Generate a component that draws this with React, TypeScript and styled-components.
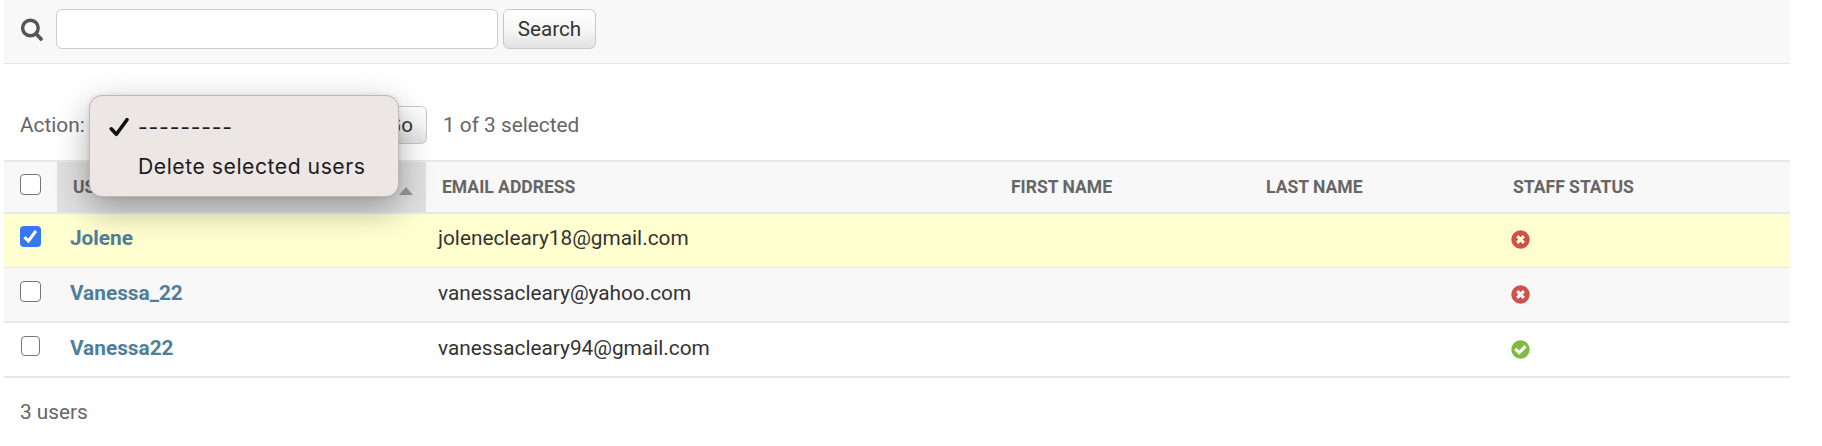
import React from "react";
import styled, { createGlobalStyle, css } from "styled-components";

const Global = createGlobalStyle`
  * { box-sizing: border-box; }
  body {
    margin: 0;
    background: #fff;
    color: #333;
    font-family: Roboto, "Liberation Sans", sans-serif;
    font-size: 20.8px;
    overflow: hidden;
  }
`;

const Page = styled.main`
  width: 1786px;
  height: 446px;
  margin-left: 4px;
`;

const Toolbar = styled.form`
  display: flex;
  align-items: flex-start;
  height: 64px;
  padding: 9px 0 0 16px;
  background: #f8f8f8;
  border-bottom: 1px solid #e4e4e4;
`;

const SearchIcon = styled.svg`
  width: 24px;
  height: 24px;
  margin: 9px 12px 0 0;
`;

const SearchInput = styled.input`
  width: 442px;
  height: 40px;
  margin: 0 5px 0 0;
  padding: 0 8px;
  border: 1px solid #ccc;
  border-radius: 6px;
  background: #fff;
`;

const Button = styled.button<{ $width: number; $height: number }>`
  width: ${(p) => p.$width}px;
  height: ${(p) => p.$height}px;
  padding: 0;
  border: 1px solid #c9c9c9;
  border-radius: 6px;
  background: linear-gradient(#fff, #f6f6f6 50%, #e2e2e2);
  color: #333;
  font: inherit;
  font-size: 20.6px;
`;

const GoText = styled.span`
  display: block;
  padding-right: 13px;
  text-align: right;
`;

const Actions = styled.div`
  position: relative;
  display: flex;
  align-items: center;
  height: 96px;
  padding: 26px 0 0 16px;
  color: #666;
  font-size: 20.8px;
`;

const ActionLabel = styled.span`
  width: 290px;
`;

const Counter = styled.span`
  margin-left: 16px;
`;

const Menu = styled.ul`
  position: absolute;
  z-index: 2;
  top: 31px;
  left: 85px;
  width: 310px;
  height: 102px;
  margin: 0;
  padding: 11px 0 0 19px;
  list-style: none;
  border: 1px solid #bbb8b7;
  border-radius: 13px;
  background: #ece6e4;
  box-shadow: 0 12px 34px rgba(0, 0, 0, 0.32), 0 0 4px rgba(0, 0, 0, 0.1);
  color: #1d1b1b;
  font-family: Inter, "Liberation Sans", sans-serif;
  font-size: 21.2px;
  letter-spacing: 0.52px;
`;

const Option = styled.li`
  display: grid;
  grid-template-columns: 29px 1fr;
  align-items: center;
  height: 39px;
  white-space: nowrap;
`;

const Dashes = styled.span`
  letter-spacing: 0.8px;
`;

const Table = styled.div`
  border-top: 2px solid #e8e8e8;
`;

const columns = css`
  display: grid;
  grid-template-columns: 53px 369px 569px 255px 247px 1fr;
`;

const HeaderRow = styled.div`
  ${columns}
  height: 52px;
  background: #f8f8f8;
  border-bottom: 2px solid #e8e8e8;
  color: #666;
  font-size: 17.55px;
  font-weight: 700;
  text-transform: uppercase;
`;

const HeaderCell = styled.div<{ $sorted?: boolean }>`
  display: flex;
  align-items: center;
  justify-content: space-between;
  padding: 0 13px 0 16px;
  background: ${(p) => (p.$sorted ? "#e0e0e0" : "transparent")};
`;

const SortArrow = styled.span`
  margin-top: 7px;
  border: solid transparent;
  border-width: 0 7px 8px;
  border-bottom-color: #999;
`;

const Row = styled.div<{ $bg: string; $line: number }>`
  ${columns}
  height: ${(p) => 53 + p.$line}px;
  background: ${(p) => p.$bg};
  border-bottom: ${(p) => p.$line}px solid #e8e8e8;
`;

const Cell = styled.div<{ $top: number }>`
  padding: ${(p) => p.$top}px 0 0 12px;
  line-height: 24px;
`;

const UserName = styled.a`
  margin-left: 1px;
  color: #507e99;
  font-weight: 700;
`;

const CheckCell = styled.div<{ $top: number }>`
  padding: ${(p) => p.$top}px 0 0 16px;
`;

const Box = styled.span<{ $on?: boolean; $small?: boolean }>`
  display: grid;
  place-items: center;
  width: ${(p) => (p.$small ? 19.5 : 21)}px;
  height: ${(p) => (p.$small ? 19.5 : 21)}px;
  margin-left: ${(p) => (p.$small ? 0.75 : 0)}px;
  border: ${(p) => (p.$on ? "0" : "1.5px solid #767676")};
  border-radius: 4px;
  background: ${(p) => (p.$on ? "#3478f6" : "#fff")};
`;

const Status = styled.svg`
  display: block;
  width: 19px;
  height: 19px;
  margin-top: 4px;
  margin-left: 2px;
`;

const Paginator = styled.p`
  margin: 22px 0 0 16px;
  color: #666;
  line-height: 24px;
`;

function Checkbox({ on, small }: { on?: boolean; small?: boolean }) {
  return (
    <Box role="checkbox" aria-checked={!!on} $on={on} $small={small}>
      {on && (
        <svg width="21" height="21" viewBox="0 0 21 21" fill="none">
          <path d="M4.4 11.2 8.4 14.9 15.9 5" stroke="#fff" strokeWidth="3.1" />
        </svg>
      )}
    </Box>
  );
}

function StaffIcon({ staff, mark }: { staff: boolean; mark: string }) {
  return (
    <Status viewBox="0 0 19 19" fill="none">
      <circle cx="9.5" cy="9.5" r="9.2" fill={staff ? "#80bb41" : "#cf514b"} />
      <path
        d={staff ? "M4.2 8.8 8.3 12.5 14.6 6.2" : "M6.2 6.2 12.8 12.8M12.8 6.2 6.2 12.8"}
        stroke={mark}
        strokeWidth="3.1"
      />
    </Status>
  );
}

const users = [
  { name: "Jolene", email: "jolenecleary18@gmail.com", staff: false, bg: "#ffffd0", line: 1, checkTop: 12, textTop: 12, small: false, on: true },
  { name: "Vanessa_22", email: "vanessacleary@yahoo.com", staff: false, bg: "#f8f8f8", line: 2, checkTop: 13, textTop: 13, small: false, on: false },
  { name: "Vanessa22", email: "vanessacleary94@gmail.com", staff: true, bg: "#fff", line: 2, checkTop: 13, textTop: 13, small: true, on: false },
];

export default function App() {
  return (
    <Page>
      <Global />
      <Toolbar>
        <SearchIcon viewBox="0 0 24 24" fill="none" stroke="#555" strokeWidth="3.4">
          <circle cx="10.4" cy="10" r="7.8" />
          <path d="M16 15.8 21 21" strokeWidth="3.8" strokeLinecap="round" />
        </SearchIcon>
        <SearchInput aria-label="Search" />
        <Button type="button" $width={93} $height={40}>Search</Button>
      </Toolbar>
      <Actions>
        <ActionLabel>Action:</ActionLabel>
        <Button type="button" $width={117} $height={38}>
          <GoText>Go</GoText>
        </Button>
        <Counter>1 of 3 selected</Counter>
        <Menu>
          <Option>
            <svg width="22" height="22" viewBox="0 0 22 22" fill="none">
              <path d="M2.2 12.8 7.4 18.3 18 3.7" stroke="#111" strokeWidth="3.6" strokeLinecap="round" strokeLinejoin="round" />
            </svg>
            <Dashes>---------</Dashes>
          </Option>
          <Option>
            <span />
            <span>Delete selected users</span>
          </Option>
        </Menu>
      </Actions>
      <Table>
        <HeaderRow>
          <CheckCell $top={12}><Checkbox /></CheckCell>
          <HeaderCell $sorted>Username<SortArrow /></HeaderCell>
          <HeaderCell>Email address</HeaderCell>
          <HeaderCell>First name</HeaderCell>
          <HeaderCell>Last name</HeaderCell>
          <HeaderCell>Staff status</HeaderCell>
        </HeaderRow>
        {users.map((u) => (
          <Row key={u.name} $bg={u.bg} $line={u.line}>
            <CheckCell $top={u.checkTop}><Checkbox on={u.on} small={u.small} /></CheckCell>
            <Cell $top={u.textTop}><UserName>{u.name}</UserName></Cell>
            <Cell $top={u.textTop}>{u.email}</Cell>
            <Cell $top={u.textTop} />
            <Cell $top={u.textTop} />
            <Cell $top={u.textTop}><StaffIcon staff={u.staff} mark={u.bg} /></Cell>
          </Row>
        ))}
      </Table>
      <Paginator>3 users</Paginator>
    </Page>
  );
}
